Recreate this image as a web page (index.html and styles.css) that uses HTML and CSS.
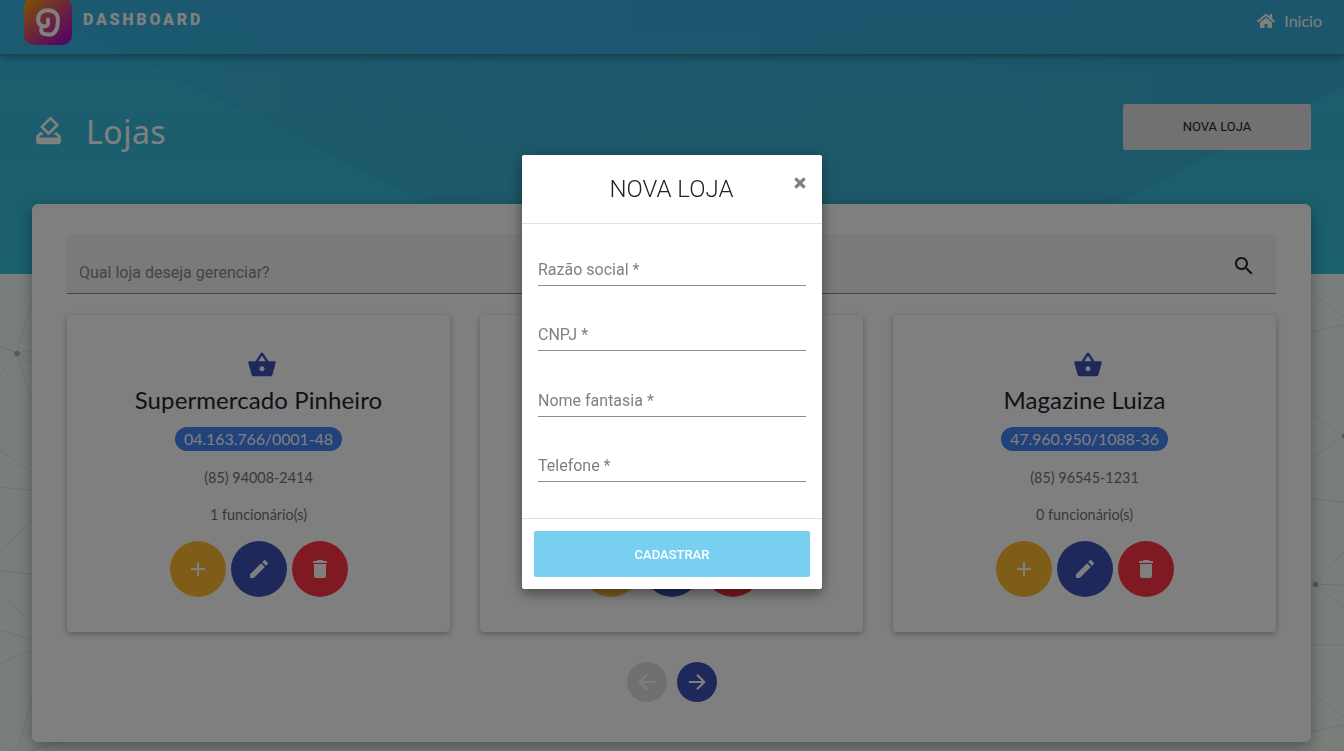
FILE: index.html
```html
<!DOCTYPE html>
<html lang="pt-BR">
<head>
<meta charset="utf-8">
<title>Dashboard - Lojas</title>
<link rel="stylesheet" href="styles.css">
</head>
<body>
<svg class="defs" aria-hidden="true">
  <symbol id="basket" viewBox="0 0 24 24"><path d="M17.21 9l-4.38-6.56c-.19-.28-.51-.42-.83-.42-.32 0-.64.14-.83.43L6.79 9H2c-.55 0-1 .45-1 1 0 .09.01.18.04.27l2.54 9.27c.23.84 1 1.46 1.92 1.46h13c.92 0 1.69-.62 1.93-1.46l2.54-9.27L23 10c0-.55-.45-1-1-1h-4.79zM9 9l3-4.4L15 9H9zm3 8c-1.1 0-2-.9-2-2s.9-2 2-2 2 .9 2 2-.9 2-2 2z"/></symbol>
  <symbol id="add" viewBox="0 0 24 24"><path d="M19 13h-6v6h-2v-6H5v-2h6V5h2v6h6v2z"/></symbol>
  <symbol id="edit" viewBox="0 0 24 24"><path d="M3 17.25V21h3.75L17.81 9.94l-3.75-3.75L3 17.25zM20.71 7.04c.39-.39.39-1.02 0-1.41l-2.34-2.34c-.39-.39-1.02-.39-1.41 0l-1.83 1.83 3.75 3.75 1.83-1.83z"/></symbol>
  <symbol id="delete" viewBox="0 0 24 24"><path d="M6 19c0 1.1.9 2 2 2h8c1.1 0 2-.9 2-2V7H6v12zM19 4h-3.5l-1-1h-5l-1 1H5v2h14V4z"/></symbol>
</svg>

<div class="page">
  <svg class="network" width="1344" height="751" viewBox="0 0 1344 751" aria-hidden="true">
    <path d="M0 346L17 353L0 375M32 301L17 353L32 350M17 353L32 363M17 353L32 402M0 450L32 473M0 487L32 490M0 551L32 521M0 571L32 574M0 590L32 626M0 630L32 640M0 663L32 651M32 700L17 751M0 746L14 751M30 751L62 742M1311 292L1344 317M1311 332L1344 325M1311 414L1344 436L1311 459M1311 499L1344 502M1311 577L1315 584L1344 551M1315 584L1344 585M1315 584L1344 607M1311 645H1344M1311 692L1344 717M1311 732L1344 725"/>
    <circle cx="17" cy="353.500" r="2.700"/><circle cx="1344.500" cy="436" r="2.700"/><circle cx="1315.500" cy="584.500" r="2.700"/>
  </svg>
  <div class="hero">
    <svg width="1344" height="274" viewBox="0 0 1344 274" aria-hidden="true">
      <defs><linearGradient id="facet" x1="0" y1="0" x2="1" y2="0"><stop offset="0" stop-color="#3aa6d0" stop-opacity=".1"/><stop offset=".4" stop-color="#3aa6d0" stop-opacity=".5"/><stop offset="1" stop-color="#3aa6d0" stop-opacity=".65"/></linearGradient></defs>
      <path d="M0 0H1344V86L980 274H570L20 0z" fill="url(#facet)"/>
    </svg>
  </div>

  <header class="topbar">
    <div class="brand">
      <svg width="48" height="48" viewBox="0 0 48 48">
        <defs><linearGradient id="logo" x1=".05" y1="0" x2=".95" y2="1"><stop offset="0" stop-color="#ffa800"/><stop offset=".5" stop-color="#d74a78"/><stop offset="1" stop-color="#a000d8"/></linearGradient></defs>
        <rect width="48" height="48" rx="10" fill="url(#logo)"/>
        <path d="M24 22.500v4c0 2-1.500 2.900-4.200 2.700-3.800-.4-5.700-3.200-5.700-6.700 0-6 4-9.300 9.600-9.300 6.200 0 10.200 3.600 10.200 9.700 0 9-2.500 14.700-9.500 14.700-5 0-7.300-1.900-7.300-4.500 0-1.600.5-2.800 1.400-3.700" fill="none" stroke="#fff" stroke-width="4" stroke-linecap="round"/>
      </svg>
      <span>DASHBOARD</span>
    </div>
    <a class="home">
      <svg width="18" height="16" viewBox="0 0 576 512"><path d="M280.370 148.260L96 300.110V464a16 16 0 0 0 16 16l112.060-.29a16 16 0 0 0 15.920-16V368a16 16 0 0 1 16-16h64a16 16 0 0 1 16 16v95.640a16 16 0 0 0 16 16.050L464 480a16 16 0 0 0 16-16V300L295.670 148.260a12.190 12.190 0 0 0-15.300 0zM571.600 251.470L488 182.560V44.050a12 12 0 0 0-12-12h-56a12 12 0 0 0-12 12v72.610L318.470 43a48 48 0 0 0-61 0L4.340 251.470a12 12 0 0 0-1.600 16.900l25.500 31A12 12 0 0 0 45.150 301l235.220-193.740a12.190 12.190 0 0 1 15.300 0L530.900 301a12 12 0 0 0 16.900-1.600l25.500-31a12 12 0 0 0-1.700-16.930z"/></svg>
      <span>Inicio</span>
    </a>
  </header>

  <section class="heading">
    <svg width="33" height="33" viewBox="0 0 24 24"><path d="M18 13h-.68l-2 2h1.910L19 17H5l1.780-2h2.050l-2-2H6l-3 3v4c0 1.100.89 2 1.990 2H19c1.100 0 2-.89 2-2v-4l-3-3zm-1-5.050l-4.950 4.950-3.540-3.540 4.950-4.950L17 7.950zm-4.240-5.660L6.390 8.660c-.39.39-.39 1.020 0 1.410l4.950 4.950c.39.39 1.020.39 1.410 0l6.360-6.360c.39-.39.39-1.020 0-1.410L14.160 2.300c-.38-.4-1.010-.4-1.400-.01z"/></svg>
    <h1>Lojas</h1>
    <button class="new-store">NOVA LOJA</button>
  </section>

  <main class="panel">
    <div class="search">
      <span>Qual loja deseja gerenciar?</span>
      <svg width="24" height="24" viewBox="0 0 24 24"><path d="M15.500 14h-.79l-.28-.27C15.410 12.590 16 11.110 16 9.500 16 5.910 13.090 3 9.500 3S3 5.910 3 9.500 5.910 16 9.500 16c1.610 0 3.090-.59 4.230-1.570l.27.28v.79l5 4.990L20.490 19l-4.990-5zm-6 0C7.010 14 5 11.990 5 9.500S7.010 5 9.500 5 14 7.010 14 9.500 11.990 14 9.500 14z"/></svg>
    </div>
    <div class="stores">
      <article class="store">
        <svg class="basket"><use href="#basket"/></svg>
        <h2>Supermercado Pinheiro</h2>
        <span class="badge">04.163.766/0001-48</span>
        <p>(85) 94008-2414</p>
        <p>1 funcionário(s)</p>
        <div class="actions"><button class="add"><svg><use href="#add"/></svg></button><button class="edit"><svg><use href="#edit"/></svg></button><button class="delete"><svg><use href="#delete"/></svg></button></div>
      </article>
      <article class="store">
        <div class="actions"><button class="add"><svg><use href="#add"/></svg></button><button class="edit"><svg><use href="#edit"/></svg></button><button class="delete"><svg><use href="#delete"/></svg></button></div>
      </article>
      <article class="store">
        <svg class="basket"><use href="#basket"/></svg>
        <h2>Magazine Luiza</h2>
        <span class="badge">47.960.950/1088-36</span>
        <p>(85) 96545-1231</p>
        <p>0 funcionário(s)</p>
        <div class="actions"><button class="add"><svg><use href="#add"/></svg></button><button class="edit"><svg><use href="#edit"/></svg></button><button class="delete"><svg><use href="#delete"/></svg></button></div>
      </article>
    </div>
    <nav class="pager">
      <button class="prev"><svg viewBox="0 0 24 24"><path d="M20 12H5M12 4.700L4.700 12l7.300 7.300"/></svg></button>
      <button class="next"><svg viewBox="0 0 24 24"><path d="M4 12h15M12 4.700l7.300 7.300-7.300 7.300"/></svg></button>
    </nav>
  </main>
</div>

<div class="backdrop">
  <div class="modal">
    <div class="modal-head">
      <h3>NOVA LOJA</h3>
      <span class="close"><svg width="12" height="12" viewBox="0 0 12 12"><path d="M1.400 1.400l9.200 9.200M10.600 1.400l-9.200 9.200"/></svg></span>
    </div>
    <div class="modal-body">
      <div class="field">Razão social *</div>
      <div class="field">CNPJ *</div>
      <div class="field">Nome fantasia *</div>
      <div class="field">Telefone *</div>
    </div>
    <div class="modal-foot"><button>CADASTRAR</button></div>
  </div>
</div>
</body>
</html>
```
FILE: styles.css
```css
* { box-sizing: border-box; }
body { margin: 0; width: 1344px; height: 751px; overflow: hidden; font-family: Lato, sans-serif; color: #212529; }
button { border: 0; padding: 0; font-family: Roboto, sans-serif; }
h1, h2, h3, p { margin: 0; font-weight: 400; }
svg { display: block; }
.defs { position: absolute; width: 0; height: 0; }

.page { position: relative; height: 751px; background: #f1fff5; }
.network, .hero { position: absolute; top: 0; left: 0; }
.network path { fill: none; stroke: #dfe3ec; stroke-width: 1; }
.network circle { fill: #aab4b0; }
.hero { width: 1344px; height: 274px; background: linear-gradient(#38b8e0, #38bcda 60%, #38bedb); }

.topbar { position: relative; display: flex; justify-content: space-between; height: 54px; padding: 0 22px 0 24px; color: #fff; background: rgba(50, 170, 235, .25); box-shadow: 0 2px 8px rgba(0, 0, 0, .4); }
.brand { display: flex; height: 48px; margin-top: -3px; gap: 11px; font: 900 16px/45px Roboto, sans-serif; letter-spacing: 2.750px; }
.home { display: flex; gap: 9px; height: 42px; align-items: center; font-size: 16px; }
.home span { margin-top: -2px; }
.home svg, .heading svg { fill: #fff; }

.heading { position: relative; display: flex; align-items: center; height: 46px; margin: 50px 33px 54px 32px; color: #fff; }
.heading svg { margin-top: 6px; }
.heading h1 { margin: 9px 0 0 21px; font: 400 32px/46px "Noto Sans", sans-serif; letter-spacing: .5px; }
.new-store { width: 188px; height: 46px; margin-left: auto; padding-bottom: 1px; border-radius: 2px; background: #e2e2e2; color: #212529; font-size: 13px; }

.panel { position: relative; width: 1279px; height: 538px; margin-left: 32px; padding: 30px 35px 0; border-radius: 6px; background: #fff; box-shadow: 0 5px 15px rgba(0, 0, 0, .35); }
.search { display: flex; justify-content: space-between; height: 60px; padding: 20px 20px 0 12px; border-bottom: 1px solid #888; border-radius: 4px 4px 0 0; background: #f5f5f5; }
.search span { padding-top: 7px; color: #888; font: 400 16px/24px Roboto, sans-serif; }
.search svg { fill: #212529; }
.stores { display: grid; grid-template-columns: repeat(3, 383px); gap: 30px; margin-top: 21px; }
.store { display: flex; flex-direction: column; align-items: center; height: 317px; padding: 35px 0; border-radius: 4px; background: #fff; box-shadow: 0 2px 6px rgba(0, 0, 0, .3); }
.basket { width: 30px; height: 30px; margin-left: 6px; fill: #3f51b5; }
.store h2 { margin-top: 1px; font-size: 24px; line-height: 38px; letter-spacing: .1px; }
.badge { width: 167px; height: 24px; margin-top: 8px; border-radius: 12px; background: #4285f4; color: #fff; font-size: 16px; line-height: 24px; letter-spacing: -.1px; text-align: center; }
.store p { height: 21px; margin-top: 16px; color: #747373; font-size: 14.400px; line-height: 21px; }
.actions { display: flex; gap: 5px; margin: auto 0 0 1px; }
.actions button { display: grid; place-items: center; width: 56px; height: 56px; border-radius: 50%; fill: #fff; }
.actions svg { width: 24px; height: 24px; }
.add { background: #ffbb33; }
.edit { background: #3f51b5; }
.delete { background: #ff3547; }
.pager { display: flex; justify-content: center; gap: 10px; margin: 30px 0 0 1px; }
.pager button { display: grid; place-items: center; width: 40px; height: 40px; border-radius: 50%; }
.pager svg { width: 24px; height: 24px; fill: none; stroke: #fff; stroke-width: 2.100; }
.prev { background: #e0e0e0; }
.next { background: #3f51b5; }

.backdrop { position: fixed; inset: 0; display: flex; align-items: flex-start; justify-content: center; padding-top: 155px; background: rgba(0, 0, 0, .5); }
.modal { width: 300px; height: 434px; border-radius: 2px; background: #fff; box-shadow: 0 5px 11px rgba(0, 0, 0, .18), 0 4px 15px rgba(0, 0, 0, .3); font-family: Roboto, sans-serif; }
.modal-head { position: relative; height: 69px; border-bottom: 1px solid #dee2e6; text-align: center; }
.modal-head h3 { padding-right: 1px; font: 300 24px/68px Roboto, sans-serif; }
.close { position: absolute; top: 22px; right: 16px; }
.close path { fill: none; stroke: #808080; stroke-width: 3.200; }
.modal-body { height: 294px; padding: 31px 16px 0; display: grid; grid-template-rows: repeat(4, 32px); row-gap: 33.400px; }
.field { height: 31px; border-bottom: 1px solid #8c8c8c; color: #808080; font-size: 16px; line-height: 30px; }
.modal-foot { padding: 12px; border-top: 1px solid #dee2e6; }
.modal-foot button { width: 276px; height: 46px; border-radius: 2px; background: #79cfef; color: #fff; font-size: 13px; font-weight: 500; }
```
